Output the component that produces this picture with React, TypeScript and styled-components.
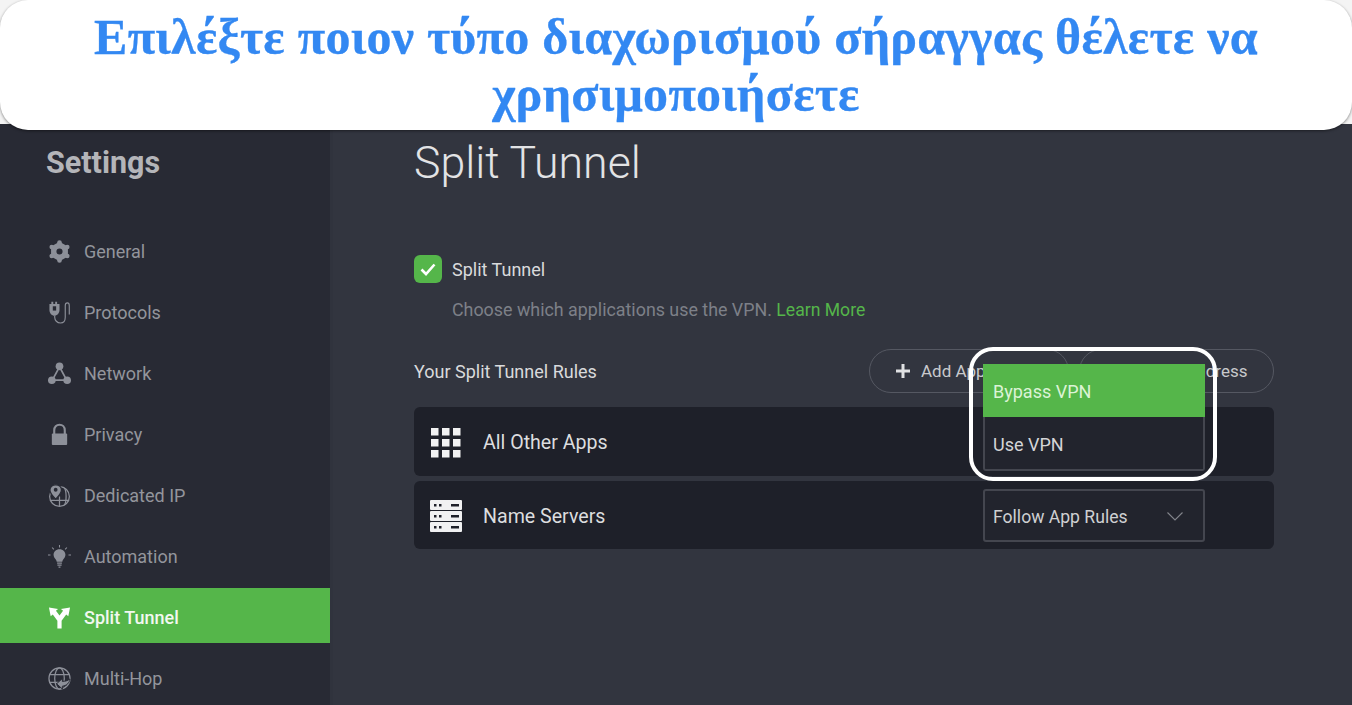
import React from "react";
import styled, { createGlobalStyle } from "styled-components";

const GlobalStyle = createGlobalStyle`
  html, body {
    margin: 0;
    padding: 0;
    background: #f4f4f4;
  }
  body {
    font-family: Roboto, "Noto Sans", sans-serif;
  }
`;

const Page = styled.div`
  position: relative;
  width: 1352px;
  height: 705px;
  overflow: hidden;
  padding-top: 124px;
  box-sizing: border-box;
`;

const Banner = styled.h1`
  position: absolute;
  top: 0;
  left: 0;
  z-index: 5;
  width: 1352px;
  height: 130px;
  box-sizing: border-box;
  margin: 0;
  padding: 9px 60px 0;
  background: #fff;
  border-radius: 28px;
  box-shadow: 0 1px 3px rgba(0, 0, 0, 0.45);
  color: #3388f2;
  font-family: "Liberation Serif", "DejaVu Serif", serif;
  font-size: 50px;
  font-weight: 700;
  line-height: 57px;
  letter-spacing: 0.26px;
  text-align: center;
  -webkit-text-stroke: 0.3px #3388f2;
`;

const Shell = styled.div`
  display: flex;
  height: 581px;
  background: #32353f;
`;

const Sidebar = styled.nav`
  width: 330px;
  flex: none;
  background: #282a34;
  border-right: 3px solid #30333d;
  padding-top: 20px;
`;

const SidebarTitle = styled.div`
  margin: 0 0 40px 46px;
  height: 38px;
  line-height: 38px;
  color: #b4b5b9;
  font-size: 30.5px;
  font-weight: 700;
`;

const NavList = styled.div`
  display: flex;
  flex-direction: column;
  gap: 6px;
`;

const NavItem = styled.div<{ $active?: boolean }>`
  display: flex;
  align-items: center;
  height: 55px;
  box-sizing: border-box;
  padding: 4px 0 0 47.5px;
  background: ${p => (p.$active ? "#55b64a" : "transparent")};
  color: ${p => (p.$active ? "#f2f8f0" : "#93959c")};
  font-size: 18px;
  font-weight: ${p => (p.$active ? 500 : 400)};

  svg {
    width: 23px;
    height: 23px;
    flex: none;
    margin-right: 13.5px;
  }
`;

const Main = styled.main`
  flex: 1;
  padding: 10px 78px 0 81px;
`;

const Title = styled.h2`
  margin: 0 0 63px;
  height: 58px;
  color: #e2e3e5;
  font-size: 44.6px;
  font-weight: 300;
  line-height: 58px;
`;

const CheckRow = styled.div`
  display: flex;
  align-items: center;
  gap: 10px;
  height: 28px;
  color: #d9dadc;
  font-size: 18px;
`;

const CheckBox = styled.span`
  display: flex;
  align-items: center;
  justify-content: center;
  width: 28px;
  height: 28px;
  border-radius: 6px;
  background: #55b64a;
`;

const Hint = styled.p`
  margin: 13px 0 0 38px;
  height: 28px;
  color: #7d8088;
  font-size: 17.85px;
  line-height: 28px;
`;

const LearnMore = styled.a`
  color: #55b64a;
  font-size: 17.6px;
`;

const RulesHeader = styled.div`
  display: flex;
  align-items: center;
  justify-content: space-between;
  margin-top: 25px;
  height: 44px;
`;

const RulesTitle = styled.span`
  color: #d9dadc;
  font-size: 18px;
`;

const ButtonGroup = styled.div`
  display: flex;
  gap: 10px;
`;

const PillButton = styled.button<{ $width: number }>`
  display: flex;
  align-items: center;
  justify-content: flex-start;
  width: ${p => p.$width}px;
  height: 44px;
  padding: 0 0 0 26px;
  box-sizing: border-box;
  border: 1px solid #555862;
  border-radius: 22px;
  background: transparent;
  color: #c8c9cc;
  font-family: inherit;
  font-size: 17px;
  white-space: nowrap;

  svg {
    margin-right: 11px;
    flex: none;
  }
`;

const RuleList = styled.div`
  position: relative;
  display: flex;
  flex-direction: column;
  gap: 5px;
  margin-top: 14px;
`;

const RuleRow = styled.div`
  display: flex;
  align-items: center;
  justify-content: space-between;
  height: 69px;
  padding: 0 69px 0 16px;
  border-radius: 6px;
  background: #1e2029;
  color: #dcdddf;
  font-size: 19.6px;

  &:nth-child(2) {
    height: 68px;
  }
`;

const RuleLabel = styled.div`
  display: flex;
  align-items: center;
  gap: 21px;
  padding-top: 2px;
`;

const SelectBox = styled.div`
  display: flex;
  align-items: center;
  justify-content: space-between;
  width: 222px;
  height: 53px;
  box-sizing: border-box;
  padding: 3px 20px 0 8px;
  border: 2px solid #44464f;
  border-radius: 3px;
  background: #22242d;
  color: #cfd0d2;
  font-size: 17.6px;
`;

const Dropdown = styled.div`
  position: absolute;
  top: -43px;
  left: 569px;
  z-index: 2;
  width: 222px;
  height: 107px;
  box-sizing: border-box;
  border: 2px solid #44464f;
  border-top: none;
  border-radius: 0 0 3px 3px;
  background: #22242d;
  font-size: 18px;
`;

const DropdownOption = styled.div<{ $active?: boolean }>`
  display: flex;
  align-items: center;
  box-sizing: border-box;
  height: ${p => (p.$active ? "53px" : "52px")};
  margin: ${p => (p.$active ? "0 -2px" : "0")};
  padding: 2px 0 0 ${p => (p.$active ? "10px" : "8px")};
  background: ${p => (p.$active ? "#55b64a" : "transparent")};
  color: ${p => (p.$active ? "#dcf3d6" : "#d4d5d7")};
`;

const HighlightRing = styled.div`
  position: absolute;
  top: -60px;
  left: 555px;
  z-index: 3;
  width: 248px;
  height: 134px;
  box-sizing: border-box;
  border: 4px solid #fff;
  border-radius: 24px;
`;

const iconFill = "#8d9099";

const GearIcon = () => (
  <svg viewBox="0 0 24 24" fill={iconFill}>
    <path
      fillRule="evenodd"
      stroke={iconFill}
      strokeWidth="2"
      strokeLinejoin="round"
      d="M12 3 19.800 7.500v9L12 21l-7.800-4.500v-9zM12 7.800a4.200 4.200 0 1 0 0 8.400 4.200 4.200 0 0 0 0-8.400z"
    />
    <circle cx="12" cy="2.600" r="2.400" />
    <circle cx="20.100" cy="7.300" r="2.400" />
    <circle cx="20.100" cy="16.700" r="2.400" />
    <circle cx="12" cy="21.400" r="2.400" />
    <circle cx="3.900" cy="16.700" r="2.400" />
    <circle cx="3.900" cy="7.300" r="2.400" />
  </svg>
);

const PlugIcon = () => (
  <svg viewBox="0 0 24 24" fill="none">
    <path
      fill={iconFill}
      d="M1.500 3h2V.8h2V3h2V.8h2V3h2.500v6.500c0 3.500-2.700 6-5.300 6s-5.200-2.500-5.200-6z"
    />
    <path fill="#282a34" d="M5 5.500h3.500v4.500H5z" />
    <path
      stroke={iconFill}
      strokeWidth="1.200"
      d="M7 15.500v1.500c0 3 2.500 6 6 6s5-3 5-6V5c0-1.700.8-3 2.200-3s2 1.300 2 3v9"
    />
  </svg>
);

const NetworkIcon = () => (
  <svg viewBox="0 0 24 24" fill={iconFill} stroke={iconFill}>
    <path fill="none" strokeWidth="1.800" d="M12 5 4.500 19h15z" />
    <circle cx="12" cy="4.500" r="4" stroke="none" />
    <circle cx="4" cy="19" r="4" stroke="none" />
    <circle cx="20" cy="19" r="4" stroke="none" />
  </svg>
);

const LockIcon = () => (
  <svg viewBox="0 0 24 24" fill="none">
    <path stroke={iconFill} strokeWidth="2.200" d="M6.500 12V7.500C6.500 4 8.800 1.800 12 1.800S17.500 4 17.500 7.500V12" />
    <rect x="4" y="11" width="16" height="12" rx="1" fill={iconFill} />
  </svg>
);

const PinGlobeIcon = () => (
  <svg viewBox="0 0 24 24" fill="none" stroke={iconFill} strokeWidth="1.300">
    <circle cx="12" cy="13" r="10.300" />
    <path d="M12 13v10M2 17h20M17 4c2.500 3 2.500 15 0 18" />
    <path
      fill={iconFill}
      stroke="#282a34"
      d="M8 .8c3.600 0 6 2.500 6 5.500 0 3.400-3.500 7-6 9.500-2.500-2.500-6-6.100-6-9.500C2 3.300 4.400.8 8 .8z"
    />
    <circle cx="8" cy="6" r="2" fill="#282a34" stroke="none" />
  </svg>
);

const BulbIcon = () => (
  <svg viewBox="0 0 24 24" fill="none" stroke={iconFill} strokeWidth="1.100">
    <path
      fill={iconFill}
      stroke="none"
      d="M12 4.500c3.800 0 6.200 2.700 6.200 5.800 0 2.500-1.600 3.800-2.500 5.200-.5.800-.7 1.300-.8 2H9.100c-.1-.7-.3-1.200-.8-2-.9-1.400-2.500-2.700-2.500-5.200 0-3.100 2.400-5.800 6.200-5.800z"
    />
    <path d="M12 0v2.500M4.300 2.600l1.800 2M19.700 2.600l-1.800 2M0 10.500h2.600M21.400 10.500H24" />
    <path strokeWidth="1.300" d="M9.500 19h5M9.800 21h4.400M11 23h2" />
  </svg>
);

const SplitIcon = () => (
  <svg viewBox="0 0 24 24" fill="#fff">
    <path d="M9.800 23.500V15.500L5 8.800 2.800 10.600 1 1.500 10.500 3 8.300 5 12 10l3.700-5-2.200-2L23 1.500l-1.800 9.100-2.200-1.800-4.800 6.700v8z" />
  </svg>
);

const GlobeIcon = () => (
  <svg viewBox="0 0 24 24" fill="none" stroke={iconFill} strokeWidth="1.300">
    <circle cx="12" cy="12" r="11" />
    <ellipse cx="12" cy="12" rx="5" ry="11" />
    <path d="M1.500 8h21M1.500 16h12" />
    <path fill={iconFill} stroke="#282a34" strokeWidth="1" d="M9 17.500 15 12v3c3 0 5-.5 8-2.500-.5 4-3.500 7-8 7.500v3z" />
  </svg>
);

const PlusIcon = () => (
  <svg width="14" height="14" viewBox="0 0 14 14" fill="#e0e1e3">
    <path d="M5.500 0h3v5.500H14v3H8.500V14h-3V8.500H0v-3h5.500z" />
  </svg>
);

const CheckIcon = () => (
  <svg width="16" height="13" viewBox="0 0 16 13" fill="none" stroke="#fff" strokeWidth="2.600">
    <path d="M1.500 6.500 6 11l8.500-9.500" />
  </svg>
);

const GridIcon = () => (
  <svg width="32" height="30" viewBox="0 0 32 30" fill="#f1f1f2">
    {[0, 11, 22].flatMap(y =>
      [1, 12, 23].map(x => <rect key={`${x}-${y}`} x={x} y={y} width="7.500" height="7.500" />)
    )}
  </svg>
);

const ServerIcon = () => (
  <svg width="32" height="32" viewBox="0 0 32 32">
    {[0, 11, 22].map(y => (
      <g key={y}>
        <rect y={y} width="32" height="10" rx="1" fill="#f1f1f2" />
        <rect x="4" y={y + 4} width="2.500" height="2.500" fill="#1e2029" />
        <rect x="9" y={y + 4} width="2.500" height="2.500" fill="#1e2029" />
        <rect x="21" y={y + 4} width="8" height="2.500" fill="#1e2029" />
      </g>
    ))}
  </svg>
);

const ChevronIcon = () => (
  <svg width="16" height="9" viewBox="0 0 16 9" fill="none" stroke="#83858c" strokeWidth="1.100">
    <path d="M.5.5 8 8 15.500.5" />
  </svg>
);

const navItems = [
  { label: "General", icon: <GearIcon /> },
  { label: "Protocols", icon: <PlugIcon /> },
  { label: "Network", icon: <NetworkIcon /> },
  { label: "Privacy", icon: <LockIcon /> },
  { label: "Dedicated IP", icon: <PinGlobeIcon /> },
  { label: "Automation", icon: <BulbIcon /> },
  { label: "Split Tunnel", icon: <SplitIcon />, active: true },
  { label: "Multi-Hop", icon: <GlobeIcon /> }
];

export default function App() {
  return (
    <>
      <GlobalStyle />
      <Page>
        <Banner>Επιλέξτε ποιον τύπο διαχωρισμού σήραγγας θέλετε να χρησιμοποιήσετε</Banner>
        <Shell>
          <Sidebar>
            <SidebarTitle>Settings</SidebarTitle>
            <NavList>
              {navItems.map(item => (
                <NavItem key={item.label} $active={item.active}>
                  {item.icon}
                  {item.label}
                </NavItem>
              ))}
            </NavList>
          </Sidebar>
          <Main>
            <Title>Split Tunnel</Title>
            <CheckRow>
              <CheckBox>
                <CheckIcon />
              </CheckBox>
              Split Tunnel
            </CheckRow>
            <Hint>
              Choose which applications use the VPN. <LearnMore>Learn More</LearnMore>
            </Hint>
            <RulesHeader>
              <RulesTitle>Your Split Tunnel Rules</RulesTitle>
              <ButtonGroup>
                <PillButton $width={200}>
                  <PlusIcon />
                  Add Application
                </PillButton>
                <PillButton $width={195}>
                  <PlusIcon />
                  Add IP Address
                </PillButton>
              </ButtonGroup>
            </RulesHeader>
            <RuleList>
              <RuleRow>
                <RuleLabel>
                  <GridIcon />
                  All Other Apps
                </RuleLabel>
              </RuleRow>
              <RuleRow>
                <RuleLabel>
                  <ServerIcon />
                  Name Servers
                </RuleLabel>
                <SelectBox>
                  Follow App Rules
                  <ChevronIcon />
                </SelectBox>
              </RuleRow>
              <Dropdown>
                <DropdownOption $active>Bypass VPN</DropdownOption>
                <DropdownOption>Use VPN</DropdownOption>
              </Dropdown>
              <HighlightRing />
            </RuleList>
          </Main>
        </Shell>
      </Page>
    </>
  );
}
